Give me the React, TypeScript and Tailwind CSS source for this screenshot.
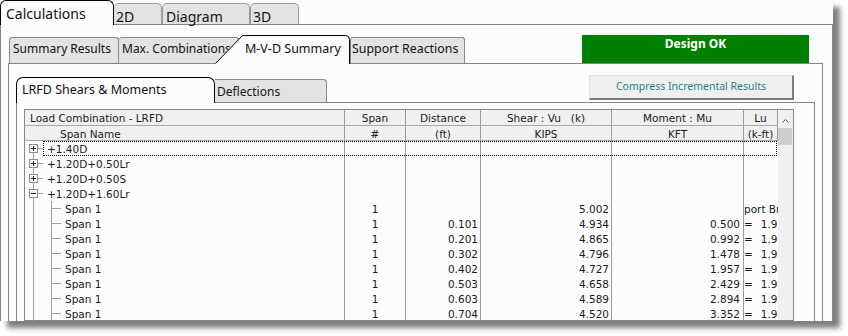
import React from 'react';

type Kind = 'first' | 'plus' | 'minus' | 'child';

interface Row {
  name: string;
  kind: Kind;
  span?: string;
  dist?: string;
  shear?: string;
  moment?: string;
  lu?: string;
}

const rows: Row[] = [
  { name: '+1.40D', kind: 'first' },
  { name: '+1.20D+0.50Lr', kind: 'plus' },
  { name: '+1.20D+0.50S', kind: 'plus' },
  { name: '+1.20D+1.60Lr', kind: 'minus' },
  { name: 'Span 1', kind: 'child', span: '1', shear: '5.002', lu: 'port Brace' },
  { name: 'Span 1', kind: 'child', span: '1', dist: '0.101', shear: '4.934', moment: '0.500', lu: '1.9' },
  { name: 'Span 1', kind: 'child', span: '1', dist: '0.201', shear: '4.865', moment: '0.992', lu: '1.9' },
  { name: 'Span 1', kind: 'child', span: '1', dist: '0.302', shear: '4.796', moment: '1.478', lu: '1.9' },
  { name: 'Span 1', kind: 'child', span: '1', dist: '0.402', shear: '4.727', moment: '1.957', lu: '1.9' },
  { name: 'Span 1', kind: 'child', span: '1', dist: '0.503', shear: '4.658', moment: '2.429', lu: '1.9' },
  { name: 'Span 1', kind: 'child', span: '1', dist: '0.603', shear: '4.589', moment: '2.894', lu: '1.9' },
  { name: 'Span 1', kind: 'child', span: '1', dist: '0.704', shear: '4.520', moment: '3.352', lu: '1.9' },
];

const cols = 'grid grid-cols-[320px_61px_75px_131px_132px_34px]';

const TreeLines = ({ kind }: { kind: Kind }) => {
  const c = '#a0a0a0';
  if (kind === 'child') {
    return (
      <svg width="40" height="15" className="shrink-0">
        <line x1="8.5" y1="0" x2="8.5" y2="15" stroke={c} />
        <line x1="26.5" y1="0" x2="26.5" y2="15" stroke={c} />
        <line x1="27" y1="7.5" x2="36" y2="7.5" stroke={c} />
      </svg>
    );
  }
  return (
    <svg width="22" height="15" className="shrink-0">
      <line x1="8.5" y1={kind === 'first' ? 7 : 0} x2="8.5" y2="15" stroke={c} />
      <line x1="13" y1="7.5" x2="18" y2="7.5" stroke={c} />
      <rect x="4.5" y="3.5" width="8" height="8" fill="#fcfcfc" stroke="#8f8f8f" />
      <line x1="6" y1="7.5" x2="11" y2="7.5" stroke="#222" />
      {kind !== 'minus' && <line x1="8.5" y1="5" x2="8.5" y2="10" stroke="#222" />}
    </svg>
  );
};

const cell = 'border-r border-[#9a9a9a] leading-[13px] pt-[2px] whitespace-nowrap overflow-hidden';

export default function App() {
  return (
    <div className="w-[848px] h-[336px] bg-white font-['Noto_Sans',sans-serif] text-[#111]">
      <div className="w-[833px] h-[321px] bg-[#fcfcfc] shadow-[7px_7px_5px_rgba(0,0,0,0.5)] flex flex-col overflow-hidden">
        {/* main tabs */}
        <div className="flex items-end h-[25px] shrink-0 border-b border-[#858585]">
          <div className="relative z-10 -mb-px h-[25px] w-[114px] rounded-t-[6px] border border-b-0 border-black bg-[#fcfcfc] pl-[5px] pt-[3px] text-[14px] leading-[19px]">
            Calculations
          </div>
          <div className="h-[21px] w-[48px] rounded-t-[5px] border border-b-0 border-l-0 border-[#9a9a9a] bg-[#e3e3e3] pl-[2px] pt-[3px] text-[14px] leading-[19px]">
            2D
          </div>
          <div className="h-[21px] w-[88px] rounded-t-[5px] border border-b-0 border-[#9a9a9a] bg-[#e3e3e3] pl-[3px] pt-[3px] text-[14px] leading-[19px]">
            Diagram
          </div>
          <div className="h-[21px] w-[49px] rounded-t-[5px] border border-b-0 border-[#9a9a9a] bg-[#e3e3e3] pl-[2px] pt-[3px] text-[14px] leading-[19px]">
            3D
          </div>
        </div>

        <div className="flex-1 min-h-0 flex flex-col border-l border-r border-[#858585] pl-[7px] pr-[9px]">
          {/* result tabs */}
          <div className="flex items-end h-[39px] shrink-0 border-b border-[#858585]">
            <div className="ml-[1px] h-[26px] w-[110px] rounded-t-[3px] border border-b-0 border-[#8a8a8a] bg-[#e3e3e3] pl-[3px] pt-[3px] text-[12px] leading-[15px] whitespace-nowrap">
              Summary Results
            </div>
            <div className="h-[26px] w-[120px] rounded-t-[3px] border border-b-0 border-l-0 border-[#8a8a8a] bg-[#e3e3e3] pl-[3px] pt-[3px] text-[12px] leading-[15px] whitespace-nowrap overflow-hidden">
              Max. Combinations
            </div>
            <div className="relative z-10 -ml-[24px] -mb-px h-[29px] w-[135px] shrink-0">
              <svg width="135" height="29" className="absolute inset-0">
                <path d="M0,29 L0.5,28.5 L27.5,0.5 L130.5,0.5 Q134.5,0.5 134.5,4.5 L134.5,29 Z" fill="#fcfcfc" />
                <path d="M0.5,28.5 L27.5,0.5 L130.5,0.5 Q134.5,0.5 134.5,4.5 L134.5,29" fill="none" stroke="#000" />
              </svg>
              <div className="relative pl-[30px] pt-[6px] text-[12.5px] leading-[15px] whitespace-nowrap">M-V-D Summary</div>
            </div>
            <div className="h-[26px] w-[115px] rounded-t-[3px] border border-b-0 border-[#8a8a8a] bg-[#e3e3e3] pl-[1px] pt-[3px] text-[12.4px] leading-[15px] whitespace-nowrap">
              Support Reactions
            </div>
            <div className="ml-auto mr-[14px] h-[28px] w-[227px] bg-[#008000] pt-[1px] text-center text-[12px] font-bold leading-[16px] text-white">
              Design OK
            </div>
          </div>

          <div className="flex-1 min-h-0 flex flex-col border-l border-r border-[#858585] pl-[7px] pr-[7px]">
            {/* LRFD tabs */}
            <div className="flex items-end h-[39px] shrink-0 border-b border-[#858585]">
              <div className="relative z-10 -mb-px h-[26px] w-[199px] rounded-t-[7px] border border-b-0 border-black bg-[#fcfcfc] pl-[5px] pt-[4px] text-[12.5px] leading-[16px] whitespace-nowrap">
                LRFD Shears &amp; Moments
              </div>
              <div className="h-[23px] w-[112px] rounded-tr-[4px] border border-b-0 border-l-0 border-[#8a8a8a] bg-[#e3e3e3] pl-[2px] pt-[4px] text-[12px] leading-[16px]">
                Deflections
              </div>
              <div className="ml-auto mr-[21px] mb-[2px] flex h-[25px] w-[205px] items-center justify-center border-t border-l border-r-2 border-b-2 border-t-[#e2e2e2] border-l-[#e2e2e2] border-r-[#7c7c7c] border-b-[#7c7c7c] bg-[#efefef] text-[10.5px] text-[#1f7f8e]">
                Compress Incremental Results
              </div>
            </div>

            <div className="flex-1 min-h-0 border-l border-r border-[#858585] pl-[7px] pr-[20px] pt-[6px]">
              <div className="flex h-full border border-[#828790] bg-[#fcfcfc] font-['DejaVu_Sans',sans-serif] text-[10.5px] text-[#1b1b1b]">
                <div className="w-[753px] flex flex-col">
                  <div className={`${cols} h-[16px] border-b border-[#a8a8a8] bg-[#f0f0f0]`}>
                    <div className={`${cell} pl-[5px]`}>Load Combination - LRFD</div>
                    <div className={`${cell} text-center`}>Span</div>
                    <div className={`${cell} text-center`}>Distance</div>
                    <div className={`${cell} text-center whitespace-pre`}>Shear : Vu   (k)</div>
                    <div className={`${cell} text-center`}>Moment : Mu</div>
                    <div className={`${cell} text-center`}>Lu</div>
                  </div>
                  <div className={`${cols} h-[15px] border-b border-[#a8a8a8] bg-[#f0f0f0]`}>
                    <div className={`${cell} pl-[35px] pt-[1px]`}>Span Name</div>
                    <div className={`${cell} text-center pt-[1px]`}>#</div>
                    <div className={`${cell} text-center pt-[1px]`}>(ft)</div>
                    <div className={`${cell} text-center pt-[1px]`}>KIPS</div>
                    <div className={`${cell} text-center pt-[1px]`}>KFT</div>
                    <div className={`${cell} text-center pt-[1px]`}>(k-ft)</div>
                  </div>
                  {rows.map((r, i) => (
                    <div key={i} className={`relative ${cols} h-[15px]`}>
                      <div className="flex h-[15px] border-r border-[#9a9a9a]">
                        <TreeLines kind={r.kind} />
                        <span className="leading-[13px] pt-[2px] whitespace-nowrap">{r.name}</span>
                      </div>
                      <div className={`${cell} text-center`}>{r.span}</div>
                      <div className={`${cell} text-right pr-[2px]`}>{r.dist}</div>
                      <div className={`${cell} text-right pr-[2px]`}>{r.shear}</div>
                      <div className={`${cell} text-right pr-[3px]`}>{r.moment}</div>
                      <div className="leading-[13px] pt-[2px] whitespace-nowrap overflow-hidden">
                        {r.moment ? (
                          <>
                            <span>=</span>
                            <span className="ml-[8px]">{r.lu}</span>
                          </>
                        ) : (
                          r.lu
                        )}
                      </div>
                      {i === 0 && (
                        <div className="absolute top-0 bottom-0 left-[18px] right-[1px] border border-dotted border-black" />
                      )}
                    </div>
                  ))}
                </div>
                <div className="w-[15px] bg-[#f0f0f0] flex flex-col">
                  <div className="h-[17px] flex justify-center pt-[9px]">
                    <svg width="7" height="4">
                      <polyline points="0.5,3.5 3.5,0.5 6.5,3.5" fill="none" stroke="#606060" />
                    </svg>
                  </div>
                  <div className="mt-[1px] h-[17px] w-[14px] bg-[#cdcdcd]" />
                </div>
              </div>
            </div>
          </div>
        </div>
      </div>
    </div>
  );
}
